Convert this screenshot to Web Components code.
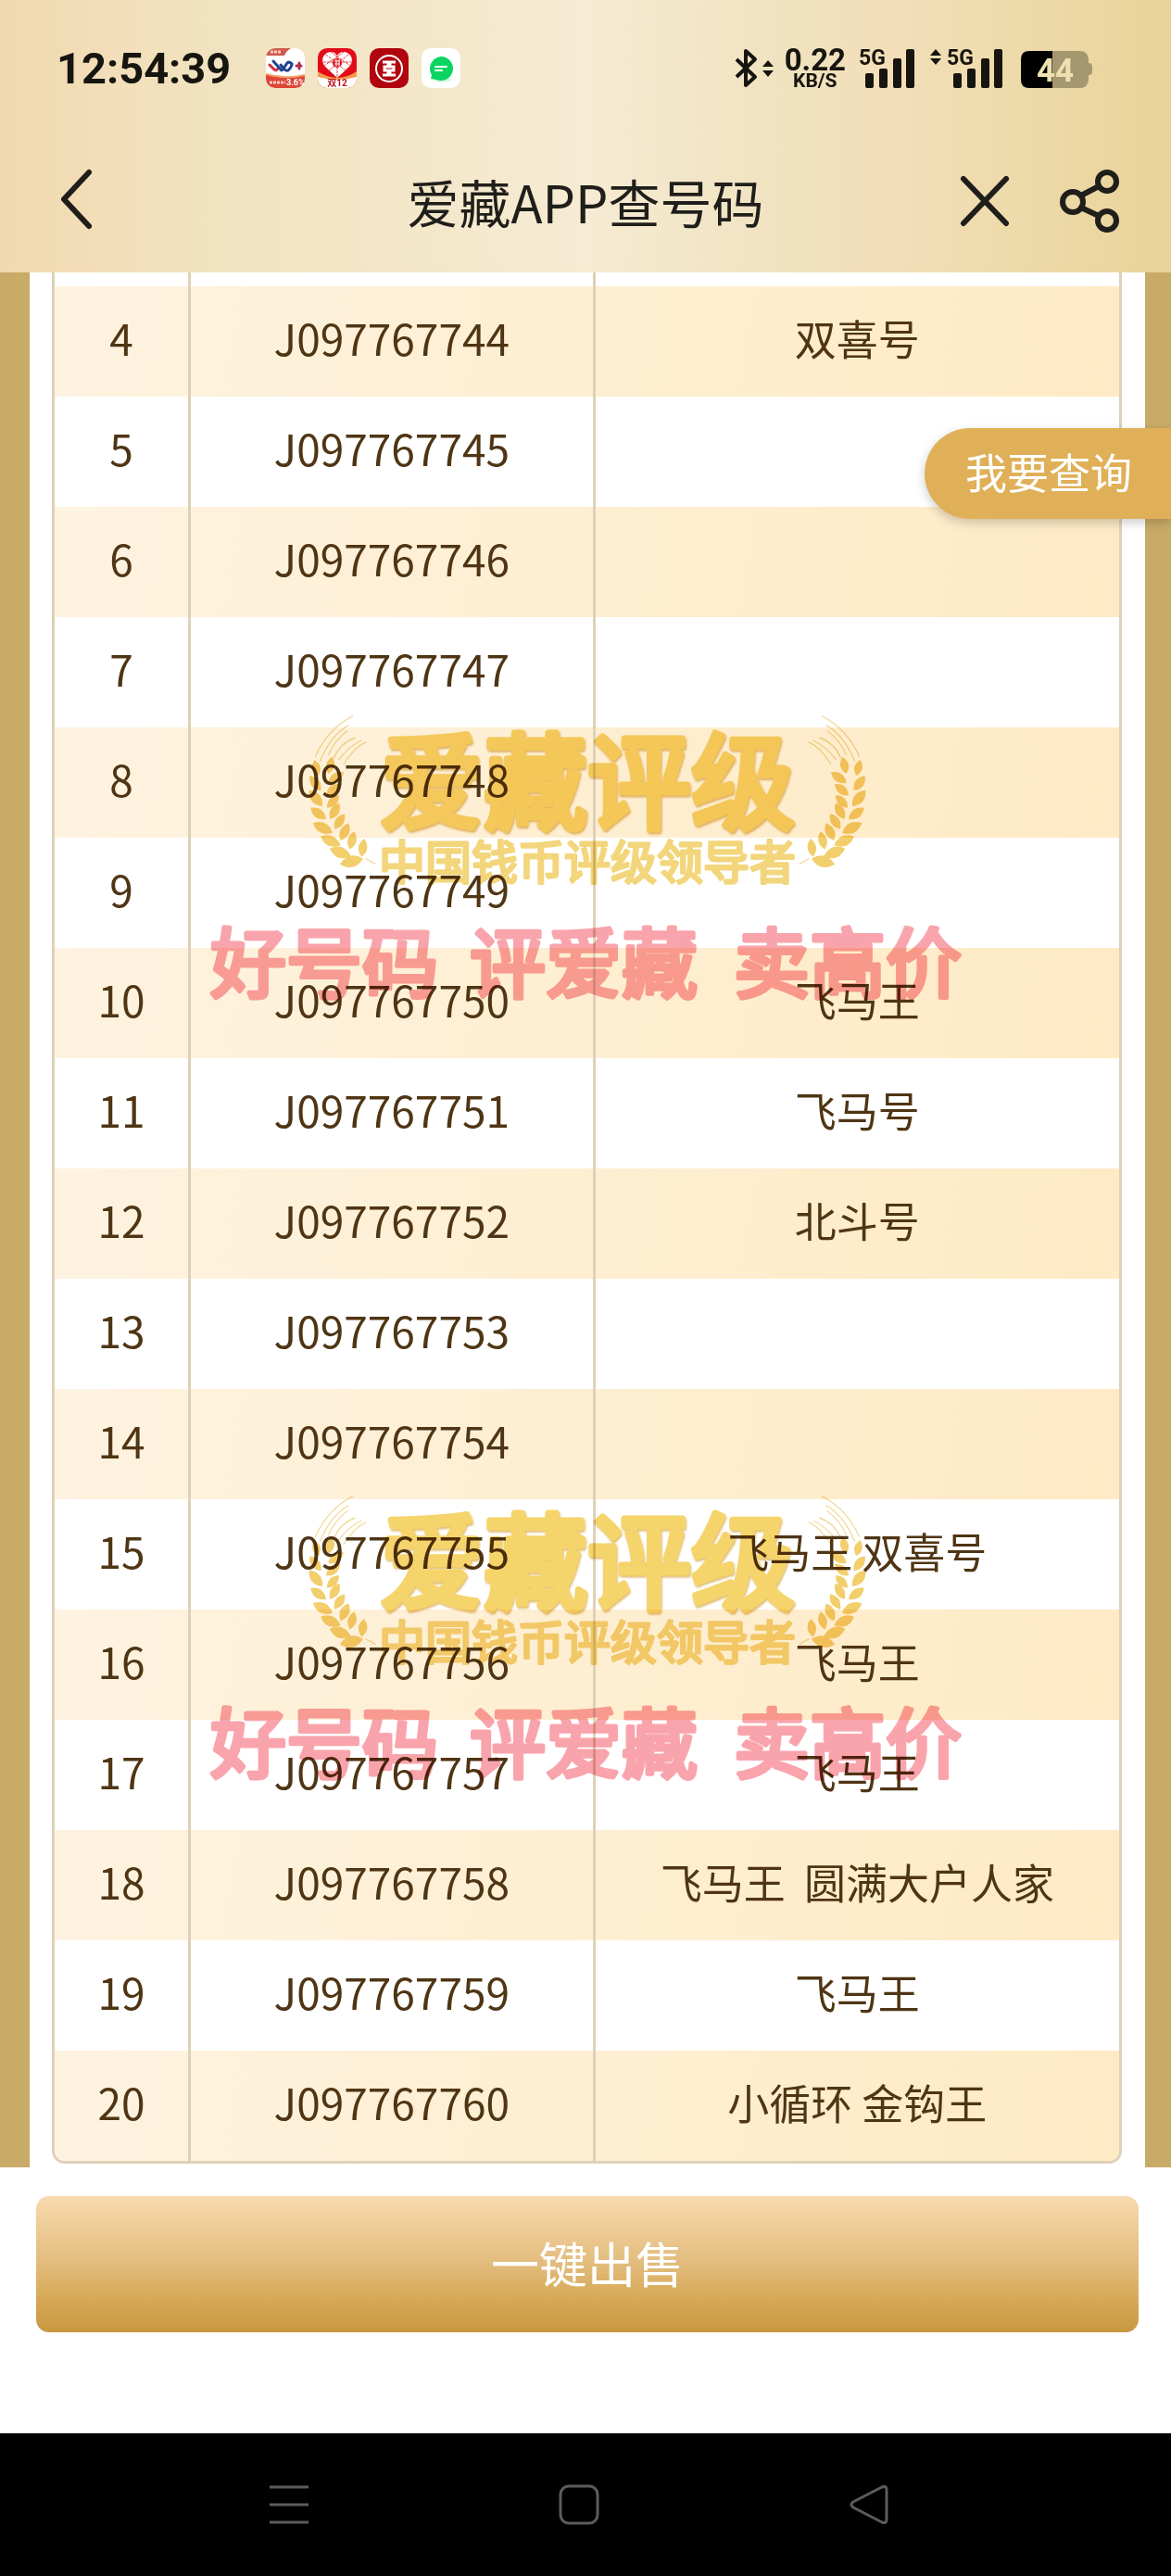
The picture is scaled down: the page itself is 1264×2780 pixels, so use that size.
<!DOCTYPE html>
<html lang="zh-CN">
<head>
<meta charset="utf-8">
<meta name="viewport" content="width=device-width, initial-scale=1">
<title>爱藏APP查号码</title>
<style>
body {
    margin: 0; background: #fff; color: #4f3514;
    font-family: "Noto Sans CJK SC", sans-serif;
}
</style>
</head>
<body>
<ac-app>
    <ac-header slot="header">爱藏APP查号码</ac-header>
    <ac-table></ac-table>
    <ac-query slot="float">我要查询</ac-query>
    <ac-sell slot="footer">一键出售</ac-sell>
    <ac-nav slot="nav"></ac-nav>
</ac-app>

<script>
// ── Status bar ──────────────────────────────────────────
const signal = (x) => `
    <text x="${x}" y="18" font-size="23">5G</text>
    <rect x="${x + 7}" y="27" width="9" height="16" rx="2"/>
    <rect x="${x + 22}" y="22" width="9" height="21" rx="2"/>
    <rect x="${x + 37}" y="11" width="9" height="32" rx="2"/>
    <rect x="${x + 51}" y="1" width="9" height="42" rx="2"/>`;

class ACStatus extends HTMLElement {
    connectedCallback() {
        const shadow = this.attachShadow({ mode: 'open' });
        shadow.innerHTML = `
<style>
:host {
    display: flex; align-items: center; justify-content: space-between;
    padding: 52px 85px 53px 61px;
    color: #17150f; font-family: Roboto, sans-serif; font-weight: 700;
}
svg { display: block; overflow: visible; font-family: Roboto, sans-serif; font-weight: 700; }
.side { display: flex; align-items: center; height: 43px; }
.apps { display: flex; gap: 14px; margin-left: 38px; }
.right { gap: 12px; }
time { font-size: 47px; line-height: 43px; }
.speed { text-align: center; font-size: 33px; line-height: 26px; }
.speed small { display: block; font-size: 21px; line-height: 18px; }
</style>
<div class="side">
    <time>12:54:39</time>
    <div class="apps">
        <svg width="42" height="43" viewBox="0 0 42 43">
            <defs><clipPath id="r"><rect width="42" height="43" rx="10"/></clipPath></defs>
            <g clip-path="url(#r)">
                <rect width="42" height="43" fill="#fff"/>
                <path d="M0 0H27Q22 3 20 8H0Z" fill="#cf5b4c"/>
                <path d="M0 28Q20 35 42 29V43H0Z" fill="#dd4638"/>
                <path d="M0 28Q20 34 42 29" stroke="#f4a069" stroke-width="2" fill="none"/>
                <g fill="none" stroke-width="3" stroke-linecap="round">
                    <path d="M4 18L9 23Q11 25 13 22" stroke="#d52f3b"/>
                    <path d="M8 14L16 23Q17 25 19 22L23 16Q25 14 28 17" stroke="#1f4594"/>
                    <path d="M28 17Q28 20 24 24Q22 25 19 22L16 18" stroke="#1f4594"/>
                    <path d="M33 19H38M36 16V22" stroke="#b52b52"/>
                </g>
                <path d="M4 37H21M5 4H17" stroke="#f7c9bd" stroke-width="3" stroke-dasharray="3 1"/>
            </g>
            <text x="22" y="40" font-size="9" fill="#fff">3.6%</text>
        </svg>
        <svg width="42" height="43" viewBox="0 0 42 43">
            <g clip-path="url(#r)">
                <rect width="42" height="43" fill="#e30b17"/>
                <path d="M0 25Q21 39 42 25V43H0Z" fill="#f29b49"/>
                <path d="M0 31Q21 37 42 31V43H0Z" fill="#fff"/>
                <path d="M21 32L7 19Q2 10 10 5Q17 2 21 8Q25 2 32 5Q40 10 35 19Z" fill="#fff"/>
                <path d="M9 7L31 25M33 7L11 25M21 8V31M6 15H36M14 4L35 19M28 4L7 19" stroke="#e3404a" stroke-width="1" stroke-dasharray="3 1" fill="none"/>
                <circle cx="21" cy="16" r="5" fill="#e30b17"/>
                <path d="M18 14H24M18 17H24M20 12V20M23 12V20" stroke="#fff"/>
            </g>
            <text x="21" y="41" font-size="10" text-anchor="middle" fill="#bd1220" style="font-family:Roboto,'Noto Sans CJK SC',sans-serif">双12</text>
        </svg>
        <svg width="42" height="43" viewBox="0 0 42 43">
            <rect width="42" height="43" rx="10" fill="#b1040f"/>
            <circle cx="21" cy="22" r="14" fill="none" stroke="#fff" stroke-width="2"/>
            <path d="M14 15H20V20H16V24H20V29H14M28 15H22V20H26V24H22V29H28" fill="none" stroke="#fff" stroke-width="3"/>
        </svg>
        <svg width="42" height="43" viewBox="0 0 42 43">
            <rect width="42" height="43" rx="10" fill="#fff"/>
            <ellipse cx="22" cy="34" rx="10" ry="3" fill="#d6f8e3"/>
            <path d="M21 9A13 13 0 1 1 16 34L10 33L11 29A13 13 0 0 1 21 9Z" fill="#0bd562"/>
            <path d="M15 20H27M15 24H22" stroke="#fff" stroke-width="2" stroke-linecap="round"/>
        </svg>
    </div>
</div>
<div class="side right">
    <svg width="42" height="43" viewBox="0 0 42 43" fill="#17150f">
        <path d="M2 12L22 31L12 40V3L22 12L2 31" fill="none" stroke="#17150f" stroke-width="4" stroke-linejoin="round"/>
        <path d="M30 20L36 13L42 20ZM30 24H42L36 31Z"/>
    </svg>
    <div class="speed">0.22<small>KB/S</small></div>
    <svg width="65" height="43" viewBox="0 0 65 43" fill="#17150f">${signal(2)}</svg>
    <svg width="88" height="43" viewBox="0 0 88 43" fill="#17150f">
        <path d="M2 8L8 1L14 8ZM2 11H14L8 18Z"/>${signal(20)}
    </svg>
    <svg width="77" height="43" viewBox="0 0 77 43">
        <path d="M34 3H64Q72 3 73 12V16Q77 16 77 20V25Q77 29 73 29V34Q72 43 64 43H34Z" fill="#a59870"/>
        <path d="M34 3V43H9Q0 43 0 34V12Q0 3 9 3Z" fill="#000"/>
        <text x="37" y="36" font-size="35" text-anchor="middle" fill="#efe0b0">44</text>
    </svg>
</div>`;
    }
}
customElements.define('ac-status', ACStatus);

// ── Header: status bar + title bar ──────────────────────
class ACHeader extends HTMLElement {
    connectedCallback() {
        const shadow = this.attachShadow({ mode: 'open' });
        shadow.innerHTML = `
<style>
:host {
    display: block; color: #1f1e1a;
    background: linear-gradient(90deg, #f0d9ae, #f3deb9 9%, #f1e3c0 18%, #f6ebd3 50%,
        #f0e2bf 68%, #f3deb9 76%, #eedbab 86%, #e9d39a);
}
.bar {
    display: grid; grid-template-columns: 1fr auto 1fr; align-items: center;
    padding: 32px 56px 40px;
}
h1 { margin: 0; font-size: 56px; line-height: 74px; font-weight: 400; }
button { padding: 0; border: none; background: none; cursor: pointer; }
svg { display: block; fill: none; stroke: #1f1e1a; stroke-width: 6; stroke-linecap: round; stroke-linejoin: round; }
.tools { display: flex; justify-content: flex-end; gap: 54px; }
</style>
<ac-status></ac-status>
<div class="bar">
    <div><button aria-label="返回"><svg width="46" height="68" viewBox="0 0 46 68"><path d="M40 5L13 34L40 63"/></svg></button></div>
    <h1><slot></slot></h1>
    <div class="tools">
        <button aria-label="关闭"><svg width="54" height="68" viewBox="0 0 54 68"><path d="M4 10L50 58M50 10L4 58"/></svg></button>
        <button aria-label="分享"><svg width="64" height="68" viewBox="0 0 64 68"><circle cx="14" cy="35" r="11"/><circle cx="51" cy="13" r="10"/><circle cx="51" cy="55" r="10"/><path d="M23 28L42 18M23 41L42 50"/></svg></button>
    </div>
</div>`;
    }
}
customElements.define('ac-header', ACHeader);

// ── Watermark: wheat emblem and slogan ──────────────────
const leaf = ([bx, by, tx, ty]) => {
    const mx = (bx + tx) / 2, my = (by + ty) / 2;
    const px = (ty - by) * .48, py = (bx - tx) * .48;
    return `M${bx} ${by}Q${mx + px} ${my + py} ${tx} ${ty}Q${mx - px} ${my - py} ${bx} ${by}Z`;
};
const leaves = [
    [430, 262, 417, 210], [438, 310, 402, 262], [443, 360, 400, 308], [455, 402, 405, 365],
    [476, 446, 412, 415], [502, 487, 437, 458], [536, 522, 466, 497], [575, 530, 500, 548],
    [462, 255, 475, 200], [462, 285, 512, 250], [455, 325, 500, 288], [458, 365, 497, 325],
    [468, 402, 498, 350], [482, 434, 515, 385], [502, 472, 528, 415], [532, 500, 546, 442], [570, 524, 578, 465]
].map(leaf).join('');

class ACMark extends HTMLElement {
    connectedCallback() {
        const wheat = (cls) => `
<svg class="${cls}" width="75" height="167" viewBox="395 60 225 501" fill="#f2cf6c">
    <path d="${leaves}"/>
    <path d="M420 200Q460 110 542 68M435 215Q470 130 528 98M462 195Q480 150 525 115M480 205Q500 155 550 138M495 210Q530 165 570 147M512 225Q545 170 585 152M583 530L615 547" fill="none" stroke="#f1dca0" stroke-width="4"/>
</svg>`;
        const shadow = this.attachShadow({ mode: 'open' });
        shadow.innerHTML = `
<style>
:host { display: block; }
svg { display: block; overflow: visible; }
text {
    font-family: "Noto Sans CJK SC", sans-serif; font-weight: 400;
    text-anchor: middle; stroke-linejoin: round;
}
.emblem { display: flex; justify-content: center; gap: 1px; }
.flip { transform: scaleX(-1); }
.name { font-size: 112px; fill: #f5d56b; stroke: #f5d56b; stroke-width: 7; filter: drop-shadow(1px 2px 1px #e0bd72); }
.sub { font-size: 50px; fill: #f3d67c; stroke: #f3d67c; stroke-width: 3; }
.slogan { margin: 55px auto 0; }
.slogan text { font-size: 82px; fill: #f9a4ac; stroke: #f9a4ac; stroke-width: 5; }
</style>
<div class="emblem">
    ${wheat('')}
    <svg width="452" height="167" viewBox="0 0 452 167">
        <text class="name" x="226" y="116">爱藏评级</text>
        <text class="sub" x="226" y="179">中国钱币评级领导者</text>
    </svg>
    ${wheat('flip')}
</div>
<svg class="slogan" width="812" height="84" viewBox="0 0 812 84">
    <text x="122" y="78">好号码</text>
    <text x="402" y="78">评爱藏</text>
    <text x="687" y="78">卖高价</text>
</svg>`;
    }
}
customElements.define('ac-mark', ACMark);

// ── Number table ────────────────────────────────────────
const names = {
    4: '双喜号', 10: '飞马王', 11: '飞马号', 12: '北斗号', 15: '飞马王 双喜号', 16: '飞马王',
    17: '飞马王', 18: '飞马王&nbsp; 圆满大户人家', 19: '飞马王', 20: '小循环 金钩王'
};

class ACTable extends HTMLElement {
    connectedCallback() {
        let rows = '';
        for (let i = 4; i <= 20; i++) {
            rows += `<tr><td>${i}</td><td>J0977677${40 + i}</td><td class="name">${names[i] || ''}</td></tr>`;
        }
        const shadow = this.attachShadow({ mode: 'open' });
        shadow.innerHTML = `
<style>
:host { display: block; position: relative; padding: 0 28px 0 32px; background: #c9ab68; }
.panel { padding: 0 25px 4px 24px; background: #fff; }
.box {
    border: 3px solid #dfd1b8; border-top: none;
    border-radius: 0 0 14px 14px; overflow: hidden;
}
table { width: 100%; table-layout: fixed; border-collapse: separate; border-spacing: 0; }
.no { width: 144px; }
.code { width: 38%; }
td { padding: 28px 0 36px; font-size: 46px; line-height: 55px; height: 55px; text-align: center; }
td.name { font-size: 45px; }
td + td { border-left: 3px solid #dfd1b8; }
thead td { padding: 0; height: 15px; line-height: 15px; }
tbody tr:nth-child(odd) { background: linear-gradient(100deg, #fef3e1, #feefd3 45%, #feeac5); }
.marks {
    position: absolute; inset: 0; padding: 476px 0 0 4px;
    display: flex; flex-direction: column; gap: 536px;
    mix-blend-mode: multiply; pointer-events: none;
}
</style>
<div class="panel"><div class="box">
    <table>
        <colgroup><col class="no"><col class="code"><col></colgroup>
        <thead><tr><td></td><td></td><td></td></tr></thead>
        <tbody>${rows}</tbody>
    </table>
</div></div>
<div class="marks"><ac-mark></ac-mark><ac-mark></ac-mark></div>`;
    }
}
customElements.define('ac-table', ACTable);

// ── Floating query button ───────────────────────────────
class ACQuery extends HTMLElement {
    connectedCallback() {
        const shadow = this.attachShadow({ mode: 'open' });
        shadow.innerHTML = `
<style>
:host { display: block; }
button {
    display: block; padding: 18px 42px 22px 44px; border: none; cursor: pointer;
    border-radius: 49px 0 0 49px; background: #dfb058; color: #fff;
    font-family: inherit; font-size: 45px; line-height: 58px;
    box-shadow: 0 4px 12px rgba(0,0,0,.2);
}
</style>
<button><slot></slot></button>`;
    }
}
customElements.define('ac-query', ACQuery);

// ── Sell button ─────────────────────────────────────────
class ACSell extends HTMLElement {
    connectedCallback() {
        const shadow = this.attachShadow({ mode: 'open' });
        shadow.innerHTML = `
<style>
:host { display: block; padding: 31px 35px 60px 39px; background: #fff; }
button {
    display: block; width: 100%; padding: 40px 0 44px; border: none; cursor: pointer;
    border-radius: 14px; color: #fff;
    background: linear-gradient(#f8daae, #e3bd7f 48%, #d7a957 75%, #c89740);
    font-family: inherit; font-size: 52px; line-height: 63px;
}
</style>
<button><slot></slot></button>`;
    }
}
customElements.define('ac-sell', ACSell);

// ── System navigation ───────────────────────────────────
class ACNav extends HTMLElement {
    connectedCallback() {
        const shadow = this.attachShadow({ mode: 'open' });
        shadow.innerHTML = `
<style>
:host {
    display: grid; grid-template-columns: repeat(3, 1fr); justify-items: center;
    padding: 55px 170px 55px 156px; background: #000;
}
button { padding: 0; border: none; background: none; cursor: pointer; }
svg { display: block; fill: none; stroke: #5c5c5c; stroke-width: 3; stroke-linejoin: round; }
</style>
<button aria-label="最近任务"><svg width="42" height="44" viewBox="0 0 42 44"><path d="M0 3H42M0 22H42M0 41H42"/></svg></button>
<button aria-label="主屏幕"><svg width="44" height="44" viewBox="0 0 44 44"><rect x="2" y="2" width="40" height="40" rx="9"/></svg></button>
<button aria-label="返回"><svg width="42" height="44" viewBox="0 0 42 44"><path d="M35 3L4 19Q0 22 4 25L35 41Q40 43 40 38V6Q40 1 35 3Z"/></svg></button>`;
    }
}
customElements.define('ac-nav', ACNav);

// ── Page shell ──────────────────────────────────────────
class ACApp extends HTMLElement {
    connectedCallback() {
        const shadow = this.attachShadow({ mode: 'open' });
        shadow.innerHTML = `
<style>
:host { display: flex; flex-direction: column; min-height: 100vh; }
main { position: relative; }
.float { position: absolute; right: 0; top: 168px; }
.foot { flex: 1; }
</style>
<slot name="header"></slot>
<main><slot></slot><div class="float"><slot name="float"></slot></div></main>
<div class="foot"><slot name="footer"></slot></div>
<slot name="nav"></slot>`;
    }
}
customElements.define('ac-app', ACApp);
</script>
</body>
</html>
